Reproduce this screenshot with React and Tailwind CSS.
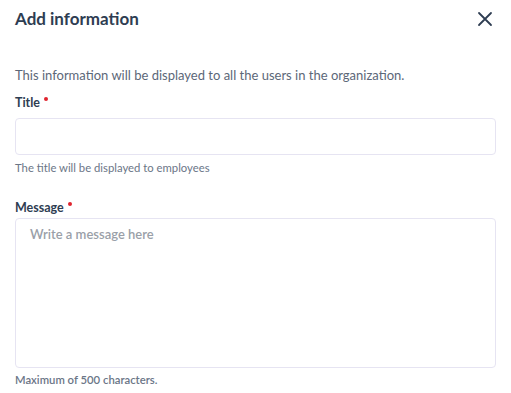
import React, { useState } from 'react';

const App = () => {
    const [title, setTitle] = useState('');
    const [message, setMessage] = useState('');

    return (
        <div className="w-[511px] h-[393px] bg-white px-[15px] pt-[8px] text-[#2e3d52]" style={{ fontFamily: 'Lato, "Liberation Sans", sans-serif' }}>
            {/* En-tête */}
            <div className="flex items-center justify-between h-[20px] mt-[1px]">
                <h1 className="text-[17px] font-bold text-[#2e3d52] leading-[20px]">Add information</h1>
                <button className="w-[20px] h-[20px] flex items-center justify-center mr-[1px] text-[#2e3d52]">
                    <svg width="16" height="16" viewBox="0 0 16 16" fill="none" stroke="currentColor" strokeWidth="1.8" strokeLinecap="round">
                        <path d="M2 2 L14 14 M14 2 L2 14" />
                    </svg>
                </button>
            </div>

            <p className="mt-[38px] text-[13px] leading-[16px] text-[#5c6778]">
                This information will be displayed to all the users in the organization.
            </p>

            {/* Titre */}
            <label className="mt-[12px] flex items-start text-[12.5px] font-bold leading-[16px] text-[#2e3d52]">
                Title<span className="ml-[4px] mt-[2px] w-[4px] h-[4px] rounded-full bg-[#e0242f]" />
            </label>
            <input
                value={title}
                onChange={(e) => setTitle(e.target.value)}
                className="mt-[7px] block w-[481px] h-[37px] rounded-[4px] border border-[#e6e4f2] px-[14px] text-[13px] outline-none"
            />
            <p className="mt-[6px] text-[11.3px] leading-[14px] text-[#6b7687]">The title will be displayed to employees</p>

            {/* Message */}
            <label className="mt-[25px] flex items-start text-[12.5px] font-bold leading-[16px] text-[#2e3d52]">
                Message<span className="ml-[4px] mt-[2px] w-[4px] h-[4px] rounded-full bg-[#e0242f]" />
            </label>
            <textarea
                value={message}
                onChange={(e) => setMessage(e.target.value)}
                placeholder="Write a message here"
                className="mt-[2px] block w-[481px] h-[150px] resize-none rounded-[4px] border border-[#e6e4f2] px-[14px] py-[6px] text-[13px] font-semibold outline-none placeholder:text-[#9a9fa8]"
            />
            <p className="mt-[5px] text-[11.3px] leading-[14px] font-semibold text-[#6b7687]">Maximum of 500 characters.</p>
        </div>
    );
};

export default App;
